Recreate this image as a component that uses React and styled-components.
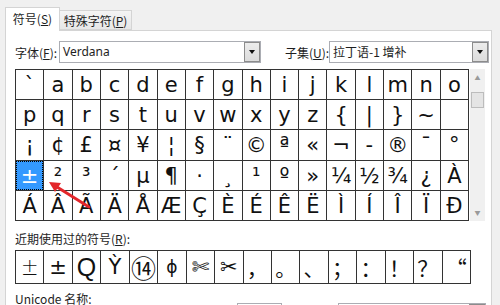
import React from "react";
import styled, { createGlobalStyle } from "styled-components";

const GlobalStyle = createGlobalStyle`
  body {
    margin: 0;
    background: #f0f0f0;
  }
`;

const uiFont = `"Noto Sans CJK SC", "Noto Sans", sans-serif`;

const rows = [
  ["`", "a", "b", "c", "d", "e", "f", "g", "h", "i", "j", "k", "l", "m", "n", "o"],
  ["p", "q", "r", "s", "t", "u", "v", "w", "x", "y", "z", "{", "|", "}", "~", ""],
  ["¡", "¢", "£", "¤", "¥", "¦", "§", "¨", "©", "ª", "«", "¬", "-", "®", "¯", "°"],
  ["±", "²", "³", "´", "µ", "¶", "·", "¸", "¹", "º", "»", "¼", "½", "¾", "¿", "À"],
  ["Á", "Â", "Ã", "Ä", "Å", "Æ", "Ç", "È", "É", "Ê", "Ë", "Ì", "Í", "Î", "Ï", "Ð"],
];

const recent = [
  { ch: "±", light: true },
  { ch: "±" },
  { ch: "Q", big: true },
  { ch: "Ỳ" },
  { ch: "⑭", cjk: true, circled: true },
  { ch: "ɸ", small: true },
  { ch: "✄" },
  { ch: "✂" },
  { ch: "，", cjk: true },
  { ch: "。", cjk: true },
  { ch: "、", cjk: true },
  { ch: "；", cjk: true },
  { ch: "：", cjk: true },
  { ch: "！", cjk: true },
  { ch: "？", cjk: true },
  { ch: "“", cjk: true },
];

const App = () => {
  return (
    <Window>
      <GlobalStyle />
      <TabBar>
        <Tab active>
          符号(<Accel>S</Accel>)
        </Tab>
        <Tab>
          特殊字符(<Accel>P</Accel>)
        </Tab>
      </TabBar>
      <Panel>
        <FieldRow>
          <Label>
            字体(<Accel>F</Accel>):
          </Label>
          <Select width={202}>
            <SelectText latin>Verdana</SelectText>
            <DropButton />
          </Select>
          <Label gap={24}>
            子集(<Accel>U</Accel>):
          </Label>
          <Select width={160}>
            <SelectText>拉丁语-1 增补</SelectText>
            <DropButton />
          </Select>
        </FieldRow>

        <GridRow>
          <CharGrid>
            {rows.flat().map((ch, i) => (
              <Cell key={i} selected={i === 48}>
                {ch}
              </Cell>
            ))}
          </CharGrid>
          <Scrollbar>
            <ScrollArrow>▲</ScrollArrow>
            <ScrollThumb />
            <ScrollArrow down>▼</ScrollArrow>
          </Scrollbar>
        </GridRow>

        <SectionLabel>
          近期使用过的符号(<Accel>R</Accel>):
        </SectionLabel>
        <RecentRow>
          {recent.map((r, i) => (
            <RecentCell
              key={i}
              light={r.light}
              big={r.big}
              cjk={r.cjk}
              small={r.small}
              circled={r.circled}
            >
              {r.ch}
            </RecentCell>
          ))}
        </RecentRow>

        <BottomRow>
          <NameLabel>Unicode 名称:</NameLabel>
          <CodeBox />
          <FromSpacer />
          <Select width={148} low>
            <SelectText />
            <DropButton />
          </Select>
        </BottomRow>
      </Panel>

      <Overlay width="500" height="305" viewBox="0 0 500 305">
        <line x1="89" y1="207" x2="57" y2="187" stroke="#e3262b" strokeWidth="3" strokeLinecap="round" />
        <polygon points="49,182 61,183 55,192" fill="#e3262b" />
      </Overlay>
    </Window>
  );
};

const Window = styled.div`
  position: relative;
  width: 500px;
  height: 305px;
  overflow: hidden;
  box-sizing: border-box;
  padding: 7px 0 0 5px;
  font-family: ${uiFont};
  font-size: 12px;
  color: #1e1e1e;
`;

const TabBar = styled.div`
  display: flex;
  align-items: flex-end;
  height: 24px;
  position: relative;
  z-index: 1;
`;

const Tab = styled.div`
  box-sizing: border-box;
  display: flex;
  align-items: center;
  justify-content: center;
  white-space: nowrap;
  border: 1px solid #d4d4d4;
  ${(p) =>
    p.active
      ? `
    width: 55px;
    height: 24px;
    background: #fff;
    border-bottom: none;
    padding-bottom: 2px;
  `
      : `
    width: 72px;
    height: 20px;
    margin-bottom: 1px;
    border-left: none;
    background: linear-gradient(#f4f4f4, #e7e7e7);
  `}
`;

const Accel = styled.span`
  text-decoration: underline;
  text-underline-offset: 1px;
`;

const Panel = styled.div`
  box-sizing: border-box;
  margin-top: -1px;
  width: 487px;
  height: 300px;
  border: 1px solid #d4d4d4;
  background: #fff;
  padding: 10px 0 0 9px;
`;

const FieldRow = styled.div`
  display: flex;
  align-items: center;
  height: 22px;
`;

const Label = styled.span`
  white-space: nowrap;
  margin-left: ${(p) => p.gap || 0}px;
  width: 41px;
  margin-right: 3px;
`;

const Select = styled.div`
  box-sizing: border-box;
  display: flex;
  width: ${(p) => p.width}px;
  height: 22px;
  border: 1px solid #abadb3;
  background: #fff;
  margin-top: ${(p) => (p.low ? 12 : 0)}px;
`;

const SelectText = styled.div`
  flex: 1;
  padding-left: 3px;
  line-height: 20px;
  font-family: ${(p) => (p.latin ? `"Noto Sans", sans-serif` : uiFont)};
  font-size: 12px;
`;

const DropButton = styled.div`
  box-sizing: border-box;
  width: 16px;
  border: 1px solid #8c8c8c;
  background: linear-gradient(#ececec, #dcdcdc);
  display: flex;
  align-items: center;
  justify-content: center;
  &::after {
    content: "";
    border-left: 3.5px solid transparent;
    border-right: 3.5px solid transparent;
    border-top: 4px solid #111;
  }
`;

const GridRow = styled.div`
  display: flex;
  margin-top: 6px;
`;

const CharGrid = styled.div`
  box-sizing: border-box;
  width: 454px;
  height: 152px;
  display: grid;
  grid-template-columns: repeat(16, 1fr);
  grid-template-rows: repeat(5, 1fr);
  gap: 1px;
  padding: 1px;
  background: #333;
`;

const Cell = styled.div`
  box-sizing: border-box;
  display: flex;
  align-items: center;
  justify-content: center;
  font-family: "DejaVu Sans", Verdana, sans-serif;
  font-size: 21px;
  line-height: 1;
  padding-top: 2px;
  color: ${(p) => (p.selected ? "#fff" : "#111")};
  background: ${(p) => (p.selected ? "#3399ff" : "#fff")};
  outline: ${(p) => (p.selected ? "1px dotted #000" : "none")};
  outline-offset: -1px;
`;

const Scrollbar = styled.div`
  box-sizing: border-box;
  width: 15px;
  height: 152px;
  margin-left: 1px;
  background: #f0f0f0;
  display: flex;
  flex-direction: column;
  align-items: center;
`;

const ScrollArrow = styled.div`
  height: 17px;
  line-height: 17px;
  font-size: 6px;
  color: #9a9a9a;
  margin-top: ${(p) => (p.down ? "auto" : "0")};
`;

const ScrollThumb = styled.div`
  box-sizing: border-box;
  width: 13px;
  height: 16px;
  margin-top: 6px;
  border: 1px solid #bcbcbc;
  background: #e4e4e4;
`;

const SectionLabel = styled.div`
  margin-top: 10px;
  line-height: 16px;
  white-space: nowrap;
`;

const RecentRow = styled.div`
  box-sizing: border-box;
  margin-top: 3px;
  width: 456px;
  height: 34px;
  display: grid;
  grid-template-columns: repeat(16, 1fr);
  gap: 1px;
  padding: 1px;
  background: #333;
`;

const RecentCell = styled.div`
  display: flex;
  align-items: center;
  justify-content: center;
  background: #fff;
  color: #111;
  line-height: 1;
  font-family: ${(p) =>
    p.cjk
      ? `"Noto Sans CJK SC", sans-serif`
      : p.big
      ? `"Liberation Sans", sans-serif`
      : `"DejaVu Sans", sans-serif`};
  font-size: ${(p) => (p.big ? 25 : p.small ? 17 : p.circled ? 25 : 21)}px;
  ${(p) => p.light && `font-family: "Noto Sans CJK SC", sans-serif; font-size: 18px; font-weight: 300;`}
`;

const BottomRow = styled.div`
  display: flex;
  align-items: flex-start;
  margin-top: 7px;
`;

const NameLabel = styled.div`
  width: 222px;
  line-height: 16px;
  white-space: nowrap;
`;

const CodeBox = styled.div`
  box-sizing: border-box;
  width: 45px;
  height: 22px;
  margin-top: 12px;
  border: 1px solid #abadb3;
`;

const FromSpacer = styled.div`
  width: 56px;
`;

const Overlay = styled.svg`
  position: absolute;
  left: 0;
  top: 0;
  pointer-events: none;
`;

export default App;
